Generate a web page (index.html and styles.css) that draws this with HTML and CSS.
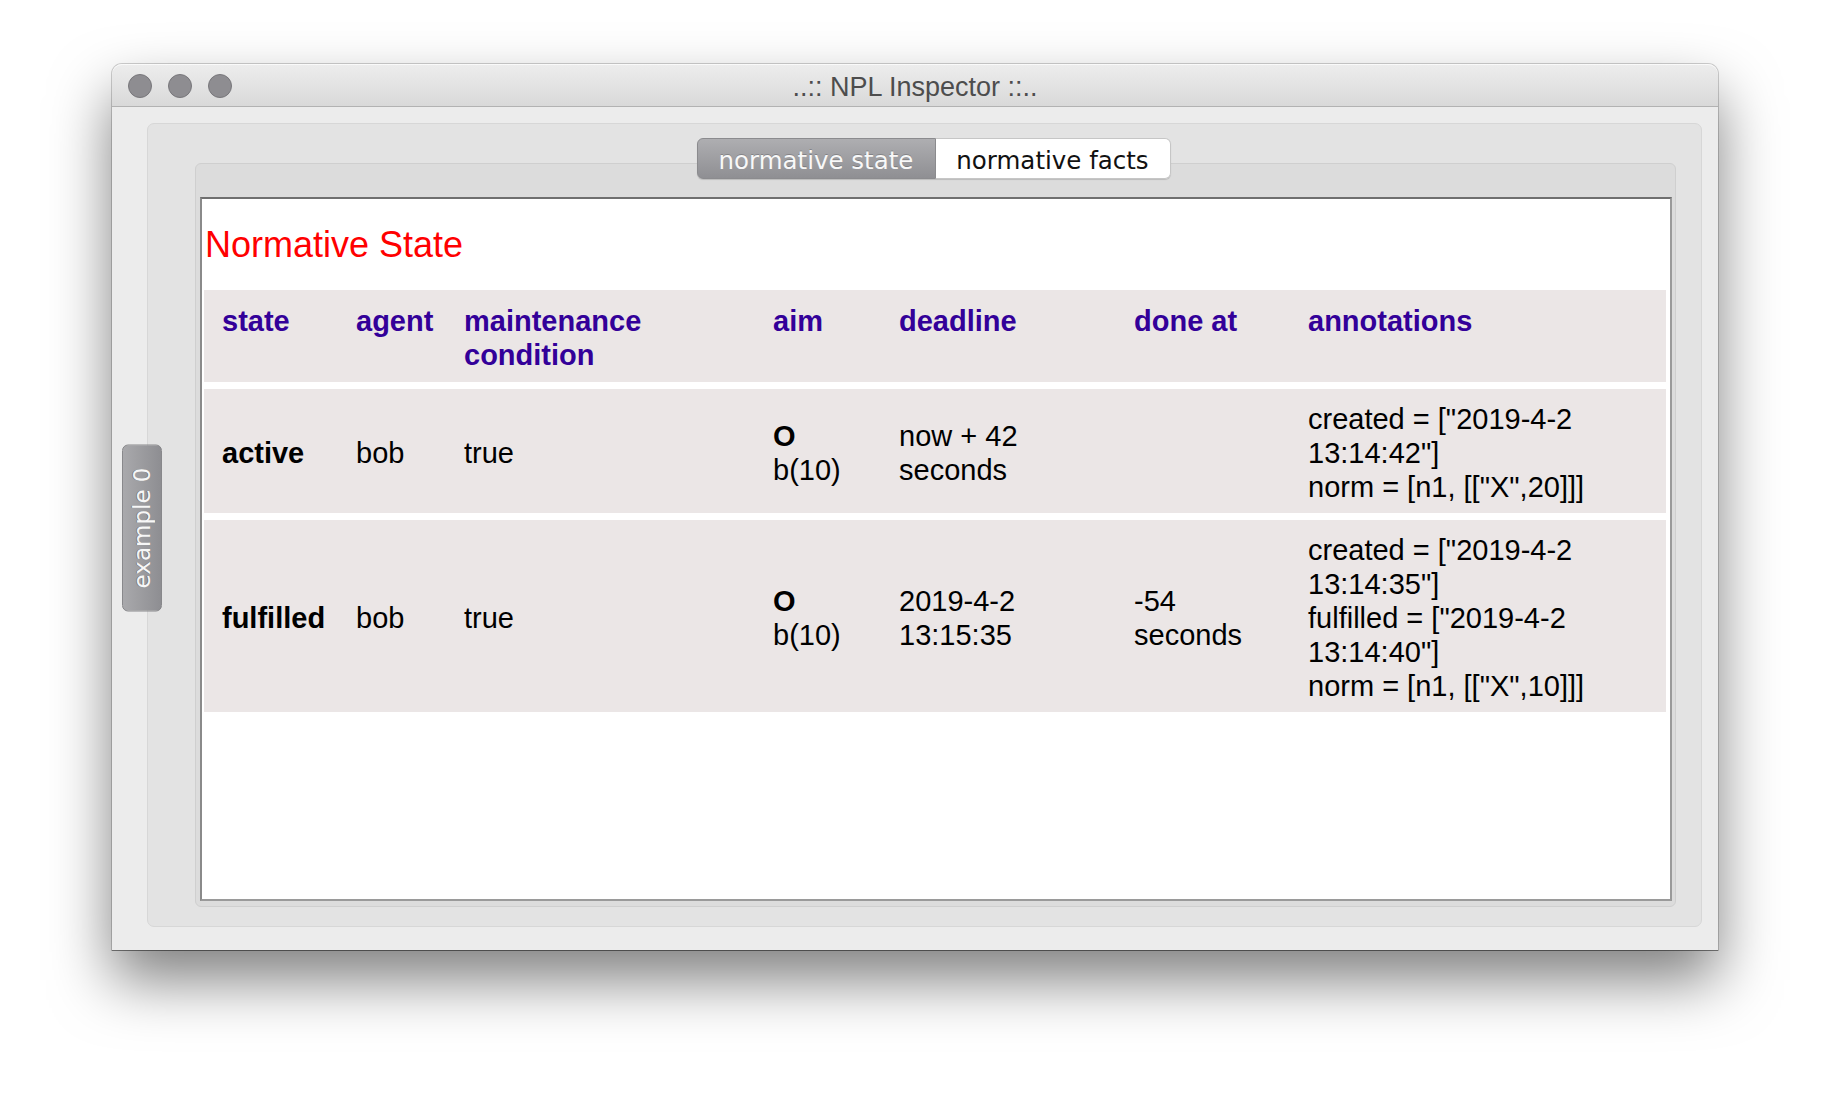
FILE: index.html
```html
<!DOCTYPE html>
<html>
<head>
<meta charset="utf-8">
<title>NPL Inspector</title>
<link rel="stylesheet" href="styles.css">
</head>
<body>
<div class="stage">
  <div class="window">
    <div class="titlebar">
      <div class="lights">
        <span class="light"></span>
        <span class="light"></span>
        <span class="light"></span>
      </div>
      <div class="title">..:: NPL Inspector ::..</div>
    </div>
    <div class="winbody">
      <div class="outer">
        <div class="sidetab"><span class="sidetab-label">example 0</span></div>
        <div class="inner">
          <div class="seg">
            <span class="seg-btn seg-on">normative state</span>
            <span class="seg-btn seg-off">normative facts</span>
          </div>
          <div class="content">
            <h1 class="heading">Normative State</h1>
            <div class="table">
              <div class="row head">
                <div class="cell">state</div>
                <div class="cell">agent</div>
                <div class="cell">maintenance<br>condition</div>
                <div class="cell">aim</div>
                <div class="cell">deadline</div>
                <div class="cell">done at</div>
                <div class="cell">annotations</div>
              </div>
              <div class="row body">
                <div class="cell strong">active</div>
                <div class="cell">bob</div>
                <div class="cell">true</div>
                <div class="cell"><b>O</b><br>b(10)</div>
                <div class="cell">now + 42<br>seconds</div>
                <div class="cell"></div>
                <div class="cell">created = ["2019-4-2<br>13:14:42"]<br>norm = [n1, [["X",20]]]</div>
              </div>
              <div class="row body">
                <div class="cell strong">fulfilled</div>
                <div class="cell">bob</div>
                <div class="cell">true</div>
                <div class="cell"><b>O</b><br>b(10)</div>
                <div class="cell">2019-4-2<br>13:15:35</div>
                <div class="cell">-54<br>seconds</div>
                <div class="cell">created = ["2019-4-2<br>13:14:35"]<br>fulfilled = ["2019-4-2<br>13:14:40"]<br>norm = [n1, [["X",10]]]</div>
              </div>
            </div>
          </div>
        </div>
      </div>
    </div>
  </div>
</div>
</body>
</html>
```
FILE: styles.css
```css
html, body {
  margin: 0;
  padding: 0;
  background: #ffffff;
}

.stage {
  padding: 64px 0 0 112px;
  height: 1110px;
  box-sizing: border-box;
  overflow: hidden;
}

.window {
  width: 1606px;
  height: 886px;
  display: flex;
  flex-direction: column;
  background: #ececec;
  border-radius: 10px 10px 0 0;
  box-shadow: 0 0 0 1px rgba(0, 0, 0, 0.18), 0 1px 0 0 rgba(0, 0, 0, 0.35), 0 30px 60px 0 rgba(0, 0, 0, 0.5);
}

.titlebar {
  position: relative;
  height: 42px;
  flex: none;
  display: flex;
  align-items: center;
  justify-content: center;
  background: linear-gradient(#ededed, #d9d9d9);
  border-bottom: 1px solid #b2b2b2;
  border-radius: 10px 10px 0 0;
  box-shadow: inset 0 1px 0 rgba(255, 255, 255, 0.7);
}

.lights {
  position: absolute;
  left: 16px;
  top: 10px;
  display: flex;
  gap: 16px;
}

.light {
  width: 22px;
  height: 22px;
  border-radius: 50%;
  background: #8e8d91;
  border: 1px solid #78777b;
}

.title {
  font-family: "Liberation Sans", Arial, sans-serif;
  font-size: 27px;
  color: #4d4d4d;
  margin-top: 5px;
}

.winbody {
  flex: 1;
  display: flex;
  padding: 16px 16px 23px 35px;
}

.outer {
  position: relative;
  flex: 1;
  display: flex;
  background: #e3e3e3;
  border: 1px solid #d7d7d7;
  border-radius: 7px;
  padding: 39px 25px 19px 47px;
}

.sidetab {
  position: absolute;
  left: -26px;
  top: calc(50% + 3px);
  transform: translateY(-50%);
  width: 38px;
  height: 165px;
  border: 1px solid #88888b;
  border-radius: 6px;
  background: linear-gradient(to right, #a9a9ac, #8e8e92);
  display: flex;
  align-items: center;
  justify-content: center;
}

.sidetab-label {
  writing-mode: vertical-rl;
  transform: rotate(180deg);
  font-family: "DejaVu Sans", Verdana, sans-serif;
  font-size: 23px;
  color: #f7f7f7;
  text-shadow: 0 -1px 0 rgba(0, 0, 0, 0.25);
}

.inner {
  position: relative;
  flex: 1;
  display: flex;
  background: #dcdcdc;
  border: 1px solid #cfcfcf;
  border-radius: 6px;
  padding: 33px 3px 5px 4px;
}

.seg {
  position: absolute;
  top: -26px;
  left: 50%;
  transform: translateX(-50%);
  margin-left: -2px;
  display: flex;
  height: 41px;
  border-radius: 6px;
  box-shadow: 0 1px 1px rgba(0, 0, 0, 0.15);
}

.seg-btn {
  display: flex;
  align-items: center;
  justify-content: center;
  font-family: "DejaVu Sans", Verdana, sans-serif;
  font-size: 24.5px;
  box-sizing: border-box;
  height: 41px;
  padding-top: 3px;
}

.seg-on {
  width: 239px;
  color: #f8f8f8;
  background: linear-gradient(#aeaeb1, #8f8f93);
  border: 1px solid #8b8b8e;
  border-radius: 6px 0 0 6px;
  text-shadow: 0 -1px 0 rgba(0, 0, 0, 0.2);
}

.seg-off {
  width: 235px;
  color: #111111;
  background: #ffffff;
  border: 1px solid #c6c6c6;
  border-left: none;
  border-radius: 0 6px 6px 0;
}

.content {
  flex: 1;
  background: #ffffff;
  border-top: 2px solid #6f6f6f;
  border-left: 2px solid #8a8a8a;
  border-right: 2px solid #9a9a9a;
  border-bottom: 2px solid #9a9a9a;
  font-family: "Liberation Sans", Arial, Helvetica, sans-serif;
}

.heading {
  margin: 25px 0 0 3px;
  font-size: 36px;
  line-height: 42px;
  font-weight: normal;
  color: #ff0000;
}

.table {
  display: flex;
  flex-direction: column;
  gap: 7px;
  margin: 24px 4px 0 2px;
}

.row {
  display: grid;
  grid-template-columns: 134px 108px 309px 126px 235px 174px 376px;
  background: #ebe6e6;
}

.cell {
  padding: 13px 0 9px 18px;
  font-size: 29px;
  line-height: 34px;
  color: #000000;
  white-space: nowrap;
  min-width: 0;
}

.head .cell {
  padding-top: 14px;
  padding-bottom: 10px;
  font-weight: bold;
  color: #330099;
  align-self: start;
}

.body .cell {
  align-self: center;
}

.strong {
  font-weight: bold;
}
```
